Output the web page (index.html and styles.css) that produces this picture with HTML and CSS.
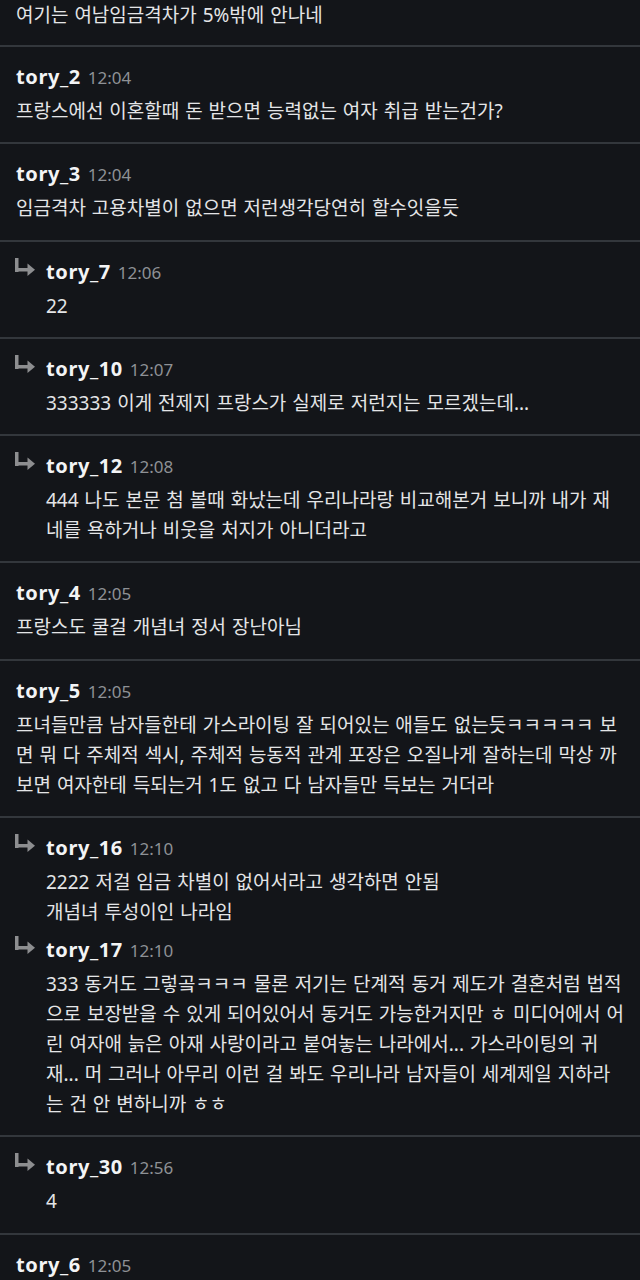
FILE: index.html
```html
<!DOCTYPE html>
<html lang="ko">
<head>
    <meta charset="UTF-8">
    <meta name="viewport" content="width=device-width, initial-scale=1.0">
    <title>댓글</title>
    <link rel="stylesheet" href="styles.css">
</head>
<body>
    <div class="comments">
        <!-- tail of the previous comment -->
        <div class="comment partial">
            <p class="text">여기는 여남임금격차가 5%밖에 안나네</p>
        </div>

        <div class="comment">
            <div class="meta"><span class="name">tory_2</span><span class="time">12:04</span></div>
            <p class="text">프랑스에선 이혼할때 돈 받으면 능력없는 여자 취급 받는건가?</p>
        </div>

        <div class="comment">
            <div class="meta"><span class="name">tory_3</span><span class="time">12:04</span></div>
            <p class="text">임금격차 고용차별이 없으면 저런생각당연히 할수잇을듯</p>
        </div>

        <div class="comment">
            <div class="reply">
                <svg class="arrow" viewBox="0 0 20 20"><rect x="0" y="1" width="3.5" height="14"/><rect x="0" y="11" width="14" height="3.5"/><polygon points="12.5,6.5 20,12.75 12.5,19"/></svg>
                <div class="body">
                    <div class="meta"><span class="name">tory_7</span><span class="time">12:06</span></div>
                    <p class="text">22</p>
                </div>
            </div>
        </div>

        <div class="comment">
            <div class="reply">
                <svg class="arrow" viewBox="0 0 20 20"><rect x="0" y="1" width="3.5" height="14"/><rect x="0" y="11" width="14" height="3.5"/><polygon points="12.5,6.5 20,12.75 12.5,19"/></svg>
                <div class="body">
                    <div class="meta"><span class="name">tory_10</span><span class="time">12:07</span></div>
                    <p class="text">333333 이게 전제지 프랑스가 실제로 저런지는 모르겠는데...</p>
                </div>
            </div>
        </div>

        <div class="comment">
            <div class="reply">
                <svg class="arrow" viewBox="0 0 20 20"><rect x="0" y="1" width="3.5" height="14"/><rect x="0" y="11" width="14" height="3.5"/><polygon points="12.5,6.5 20,12.75 12.5,19"/></svg>
                <div class="body">
                    <div class="meta"><span class="name">tory_12</span><span class="time">12:08</span></div>
                    <p class="text">444 나도 본문 첨 볼때 화났는데 우리나라랑 비교해본거 보니까 내가 재<br>네를 욕하거나 비웃을 처지가 아니더라고</p>
                </div>
            </div>
        </div>

        <div class="comment">
            <div class="meta"><span class="name">tory_4</span><span class="time">12:05</span></div>
            <p class="text">프랑스도 쿨걸 개념녀 정서 장난아님</p>
        </div>

        <div class="comment">
            <div class="meta"><span class="name">tory_5</span><span class="time">12:05</span></div>
            <p class="text">프녀들만큼 남자들한테 가스라이팅 잘 되어있는 애들도 없는듯ㅋㅋㅋㅋㅋ 보<br>면 뭐 다 주체적 섹시, 주체적 능동적 관계 포장은 오질나게 잘하는데 막상 까<br>보면 여자한테 득되는거 1도 없고 다 남자들만 득보는 거더라</p>
        </div>

        <div class="comment">
            <div class="reply">
                <svg class="arrow" viewBox="0 0 20 20"><rect x="0" y="1" width="3.5" height="14"/><rect x="0" y="11" width="14" height="3.5"/><polygon points="12.5,6.5 20,12.75 12.5,19"/></svg>
                <div class="body">
                    <div class="meta"><span class="name">tory_16</span><span class="time">12:10</span></div>
                    <p class="text">2222 저걸 임금 차별이 없어서라고 생각하면 안됨<br>개념녀 투성이인 나라임</p>
                </div>
            </div>
            <div class="reply">
                <svg class="arrow" viewBox="0 0 20 20"><rect x="0" y="1" width="3.5" height="14"/><rect x="0" y="11" width="14" height="3.5"/><polygon points="12.5,6.5 20,12.75 12.5,19"/></svg>
                <div class="body">
                    <div class="meta"><span class="name">tory_17</span><span class="time">12:10</span></div>
                    <p class="text">333 동거도 그렇곸ㅋㅋㅋ 물론 저기는 단계적 동거 제도가 결혼처럼 법적<br>으로 보장받을 수 있게 되어있어서 동거도 가능한거지만 ㅎ 미디어에서 어<br>린 여자애 늙은 아재 사랑이라고 붙여놓는 나라에서... 가스라이팅의 귀<br>재... 머 그러나 아무리 이런 걸 봐도 우리나라 남자들이 세계제일 지하라<br>는 건 안 변하니까 ㅎㅎ</p>
                </div>
            </div>
        </div>

        <div class="comment">
            <div class="reply">
                <svg class="arrow" viewBox="0 0 20 20"><rect x="0" y="1" width="3.5" height="14"/><rect x="0" y="11" width="14" height="3.5"/><polygon points="12.5,6.5 20,12.75 12.5,19"/></svg>
                <div class="body">
                    <div class="meta"><span class="name">tory_30</span><span class="time">12:56</span></div>
                    <p class="text">4</p>
                </div>
            </div>
        </div>

        <div class="comment">
            <div class="meta"><span class="name">tory_6</span><span class="time">12:05</span></div>
        </div>
    </div>
</body>
</html>
```

FILE: styles.css
```css
* {
    margin: 0;
    padding: 0;
    box-sizing: border-box;
}

body {
    font-family: 'Noto Sans', 'Noto Sans CJK KR', sans-serif;
    background: #131519;
    color: #e4e5e7;
    overflow: hidden;
}

.comments {
    display: flex;
    flex-direction: column;
}

.comment {
    padding: 15px 4px 16.3px 16px;
    border-bottom: 2px solid #33373c;
}

.comment.partial {
    padding-top: 0;
    padding-bottom: 15px;
}

.meta {
    height: 30px;
    line-height: 30px;
    white-space: nowrap;
    margin-bottom: 4px;
}

.name {
    font-size: 20px;
    font-weight: 700;
    letter-spacing: 0.6px;
    color: #f3f4f5;
}

.time {
    font-size: 17px;
    color: #8e9195;
    margin-left: 7px;
}

.text {
    font-size: 19px;
    line-height: 30px;
    word-spacing: 1px;
    color: #e4e5e7;
    word-break: break-all;
}

.reply {
    display: flex;
    gap: 11px;
    margin-left: -1px;
}

.reply + .reply {
    margin-top: 8px;
}

.arrow {
    flex: none;
    width: 20px;
    height: 20px;
    fill: #8d8e90;
}

.body {
    flex: 1;
    min-width: 0;
}
```
